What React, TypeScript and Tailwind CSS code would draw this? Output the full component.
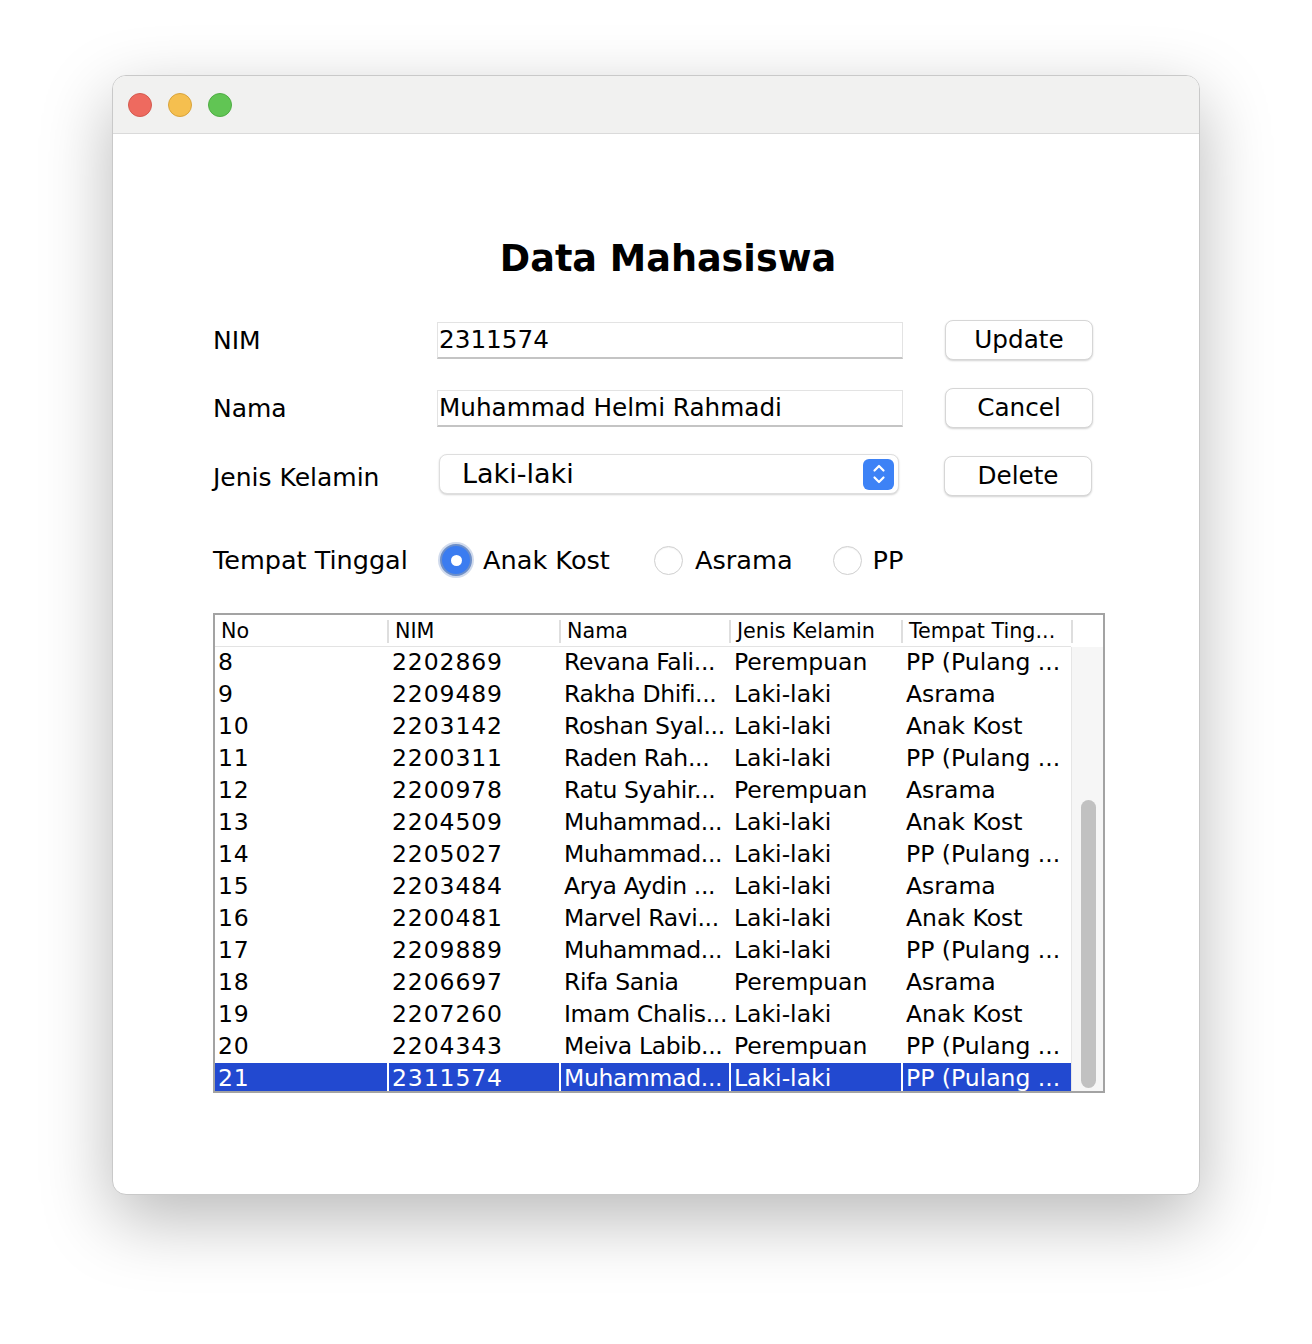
import React from "react";

const rows: [string, string, string, string, string][] = [
  ["8", "2202869", "Revana Fali...", "Perempuan", "PP (Pulang ..."],
  ["9", "2209489", "Rakha Dhifi...", "Laki-laki", "Asrama"],
  ["10", "2203142", "Roshan Syal...", "Laki-laki", "Anak Kost"],
  ["11", "2200311", "Raden Rah...", "Laki-laki", "PP (Pulang ..."],
  ["12", "2200978", "Ratu Syahir...", "Perempuan", "Asrama"],
  ["13", "2204509", "Muhammad...", "Laki-laki", "Anak Kost"],
  ["14", "2205027", "Muhammad...", "Laki-laki", "PP (Pulang ..."],
  ["15", "2203484", "Arya Aydin ...", "Laki-laki", "Asrama"],
  ["16", "2200481", "Marvel Ravi...", "Laki-laki", "Anak Kost"],
  ["17", "2209889", "Muhammad...", "Laki-laki", "PP (Pulang ..."],
  ["18", "2206697", "Rifa Sania", "Perempuan", "Asrama"],
  ["19", "2207260", "Imam Chalis...", "Laki-laki", "Anak Kost"],
  ["20", "2204343", "Meiva Labib...", "Perempuan", "PP (Pulang ..."],
  ["21", "2311574", "Muhammad...", "Laki-laki", "PP (Pulang ..."],
];

const headers = ["No", "NIM", "Nama", "Jenis Kelamin", "Tempat Ting..."];

function Button({ label }: { label: string }) {
  return (
    <div className="w-[148px] h-[40px] rounded-[8px] bg-white border border-[#d6d6d6] shadow-[0_1px_2px_rgba(0,0,0,0.18)] flex items-center justify-center text-[24.7px] text-black">
      {label}
    </div>
  );
}

function TextField({ value }: { value: string }) {
  return (
    <div className="w-[466px] h-[37px] bg-white border border-[#e3e3e3] border-b-[2px] border-b-[#c4c4c4] flex items-center pl-[1px] text-[24.7px] text-black">
      {value}
    </div>
  );
}

function Radio({ checked }: { checked?: boolean }) {
  if (checked) {
    return (
      <div className="w-[32px] h-[32px] rounded-full bg-[#3b7cf0] border-[2px] border-[#6d8fc9] shadow-[0_0_0_2px_rgba(120,150,200,0.35)] flex items-center justify-center">
        <div className="w-[11px] h-[11px] rounded-full bg-white" />
      </div>
    );
  }
  return (
    <div className="w-[29px] h-[29px] rounded-full bg-white border border-[#cfcfcf] shadow-[inset_0_1px_1px_rgba(0,0,0,0.05)]" />
  );
}

export default function App() {
  return (
    <div
      className="min-h-[1344px] w-[1312px] bg-white pt-[75px] pl-[112px]"
      style={{ fontFamily: '"DejaVu Sans", sans-serif' }}
    >
      <div className="w-[1088px] h-[1120px] rounded-[14px] bg-white border border-[#c9c9c9] shadow-[0_24px_70px_rgba(0,0,0,0.28)] overflow-hidden flex flex-col">
        {/* title bar */}
        <div className="h-[58px] shrink-0 bg-[#f1f1f0] border-b border-[#dadada] flex items-center pl-[15px] gap-[16px]">
          <div className="w-[24px] h-[24px] rounded-full bg-[#ee6a5f] border border-[#d45a4f]" />
          <div className="w-[24px] h-[24px] rounded-full bg-[#f5bf4f] border border-[#d9a43c]" />
          <div className="w-[24px] h-[24px] rounded-full bg-[#61c554] border border-[#4fad44]" />
        </div>

        {/* title */}
        <div className="h-[172px] shrink-0 pt-[103px] text-center">
          <div className="text-[36.6px] leading-[44px] font-bold text-black pl-[24px]">Data Mahasiswa</div>
        </div>

        <div className="pl-[100px]">
          {/* NIM */}
          <div className="flex items-center h-[68px]">
            <div className="w-[224px] text-[25px] text-black pt-[2px]">NIM</div>
            <TextField value="2311574" />
            <div className="ml-[42px]">
              <Button label="Update" />
            </div>
          </div>
          {/* Nama */}
          <div className="flex items-center h-[68px]">
            <div className="w-[224px] text-[25px] text-black pt-[2px]">Nama</div>
            <TextField value="Muhammad Helmi Rahmadi" />
            <div className="ml-[42px]">
              <Button label="Cancel" />
            </div>
          </div>
          {/* Jenis Kelamin */}
          <div className="flex items-center h-[68px]">
            <div className="w-[225px] text-[25px] text-black pt-[4px]">Jenis Kelamin</div>
            <div className="ml-[1px] mb-[4px] w-[460px] h-[40px] rounded-[8px] bg-white border border-[#dedede] shadow-[0_1px_2px_rgba(0,0,0,0.18)] flex items-center pl-[22px] pr-[4px]">
              <span className="flex-1 text-[27px] text-black">Laki-laki</span>
              <div className="w-[31px] h-[31px] rounded-[6px] bg-[#3d82f6] flex items-center justify-center">
                <svg width="16" height="24" viewBox="0 0 16 24" fill="none">
                  <path d="M3.5 8.5 L8 4 L12.5 8.5" stroke="white" strokeWidth="2.2" strokeLinecap="round" strokeLinejoin="round" />
                  <path d="M3.5 15.5 L8 20 L12.5 15.5" stroke="white" strokeWidth="2.2" strokeLinecap="round" strokeLinejoin="round" />
                </svg>
              </div>
            </div>
            <div className="ml-[45px]">
              <Button label="Delete" />
            </div>
          </div>

          {/* Tempat Tinggal */}
          <div className="mt-[16px] h-[68px] flex items-center text-[25.6px] text-black">
            <div className="w-[227px] text-[25.5px]">Tempat Tinggal</div>
            <Radio checked />
            <span className="ml-[11px]">Anak Kost</span>
            <div className="ml-[44px]">
              <Radio />
            </div>
            <span className="ml-[12px]">Asrama</span>
            <div className="ml-[40px]">
              <Radio />
            </div>
            <span className="ml-[11px]">PP</span>
          </div>

          {/* table */}
          <div className="mt-[19px] w-[892px] h-[480px] border-[2px] border-[#a3a3a3] bg-white flex overflow-hidden">
            <div className="w-[856px] flex flex-col">
              <div className="h-[32px] shrink-0 grid grid-cols-[172px_170px_168px_170px_168px] gap-x-[2px] border-b border-[#e3e3e3]">
                {headers.map((h, i) => (
                  <div key={i} className="relative flex items-center pl-[6px] pt-[1px] text-[20.7px] text-black whitespace-nowrap">
                    {h}
                    <div className="absolute right-[-2px] top-[5px] bottom-[4px] w-[2px] bg-[#dedede]" />
                  </div>
                ))}
              </div>
              <div className="flex flex-col">
                {rows.map((r, ri) => {
                  const sel = ri === rows.length - 1;
                  return (
                    <div key={ri} className="h-[32px] shrink-0">
                      <div className="h-[30px] grid grid-cols-[172px_170px_168px_170px_168px] gap-x-[2px]">
                        {r.map((c, ci) => (
                          <div
                            key={ci}
                            className={
                              "flex items-center pl-[3px] pt-[1px] text-[23.5px] whitespace-nowrap overflow-hidden " +
                              (ci < 2 ? "tracking-[0.9px] " : ci === 2 ? "tracking-[-0.35px] " : "tracking-[0px] ") +
                              (sel ? "bg-[#2249d0] text-white" : "text-black")
                            }
                          >
                            {c}
                          </div>
                        ))}
                      </div>
                    </div>
                  );
                })}
              </div>
            </div>
            {/* scrollbar */}
            <div className="w-[32px] flex flex-col">
              <div className="h-[32px] shrink-0 bg-white" />
              <div className="flex-1 bg-[#f6f6f6] border-l border-[#e6e6e6] pl-[9px] pt-[153px] pb-[3px]">
                <div className="w-[15px] h-full rounded-full bg-[#c1c1c1]" />
              </div>
            </div>
          </div>
        </div>
      </div>
    </div>
  );
}
